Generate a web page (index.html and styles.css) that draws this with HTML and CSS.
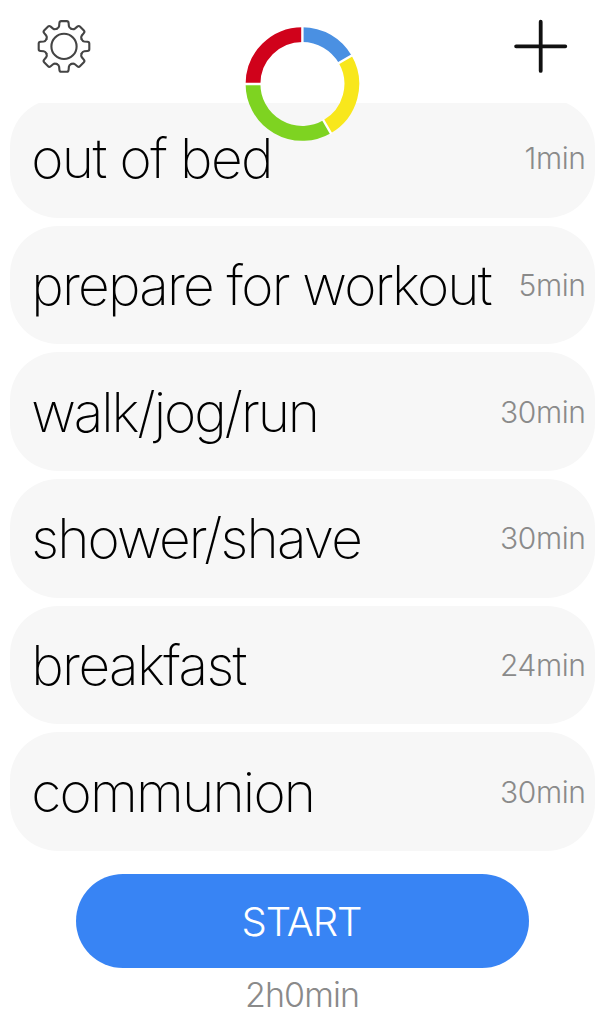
FILE: index.html
```html
<!DOCTYPE html>
<html lang="en">
<head>
<meta charset="utf-8">
<title>Routine</title>
<link rel="stylesheet" href="styles.css">
</head>
<body>
<div class="screen">
  <header class="topbar">
    <svg class="icon gear" viewBox="-28 -28.4 56 56" aria-label="Settings">
      <defs><path id="tooth" d="M-7.27-17.55C-5.6-18.3-5.1-18.8-4.9-20.3L-4.6-23.4Q-4.4-25.3-2.8-25.3H2.8Q4.4-25.3 4.6-23.4L4.9-20.3C5.1-18.8 5.6-18.3 7.27-17.55"/></defs>
      <circle r="12.6"/>
      <use href="#tooth"/><use href="#tooth" transform="rotate(45)"/><use href="#tooth" transform="rotate(90)"/><use href="#tooth" transform="rotate(135)"/><use href="#tooth" transform="rotate(180)"/><use href="#tooth" transform="rotate(225)"/><use href="#tooth" transform="rotate(270)"/><use href="#tooth" transform="rotate(315)"/>
    </svg>
    <svg class="ring" viewBox="-58.4 -58 117 116" aria-hidden="true">
      <g class="arcs">
        <path class="blue" d="M0-49.4A49.4 49.4 0 0 1 42.78-24.7"/>
        <path class="yellow" d="M42.78-24.7A49.4 49.4 0 0 1 24.7 42.78"/>
        <path class="green" d="M24.7 42.78A49.4 49.4 0 0 1-49.4 0"/>
        <path class="red" d="M-49.4 0A49.4 49.4 0 0 1 0-49.4"/>
      </g>
      <path class="gaps" d="M0-41V-58M35.5-20.5L50.2-29M20.5 35.5L29 50.2M-41 0H-58"/>
    </svg>
    <svg class="icon plus" viewBox="-28.7 -28.3 56 56" aria-label="Add"><path d="M-24.6 0H24.6M0-24.6V24.6"/></svg>
  </header>
  <main class="list">
    <div class="card"><span class="name">out of bed</span><span class="time">1min</span></div>
    <div class="card"><span class="name phrase">prepare for workout</span><span class="time">5min</span></div>
    <div class="card"><span class="name tight">walk/jog/run</span><span class="time">30min</span></div>
    <div class="card"><span class="name phrase">shower/shave</span><span class="time">30min</span></div>
    <div class="card"><span class="name">breakfast</span><span class="time">24min</span></div>
    <div class="card"><span class="name phrase">communion</span><span class="time">30min</span></div>
  </main>
  <footer class="footer">
    <button class="start">START</button>
    <div class="total">2h0min</div>
  </footer>
</div>
</body>
</html>
```
FILE: styles.css
```css
* { box-sizing: border-box; }
body { margin: 0; background: #fff; font-family: Inter, "Open Sans", sans-serif; }
.screen { width: 604px; height: 1024px; display: flex; flex-direction: column; overflow: hidden; }
.topbar { position: relative; height: 103px; flex: none; display: flex; justify-content: space-between; align-items: flex-start; padding: 18px 36px 0 36px; }
.icon { width: 56px; height: 56px; fill: none; stroke-linecap: round; stroke-linejoin: round; }
.gear { stroke: #444; stroke-width: 2.1; }
.plus { stroke: #111; stroke-width: 3.8; }
/* The progress ring overlaps the first card. */
.ring { position: absolute; z-index: 1; left: 244px; top: 26px; width: 117px; height: 116px; fill: none; }
.arcs { stroke-width: 14.8; }
.blue { stroke: #4a90e2; }
.yellow { stroke: #f8e71c; }
.green { stroke: #7ed321; }
.red { stroke: #d0021b; }
.gaps { stroke: #fff; stroke-width: 2.4; }
.list { flex: none; height: 748px; overflow: hidden; display: flex; flex-direction: column; justify-content: flex-end; gap: 8px; padding: 0 9px 0 9.7px; }
.card { flex: none; height: 118.67px; border-radius: 48px; background: #f7f7f7; display: flex; align-items: center; justify-content: space-between; padding: 0 9.4px 0 21.5px; white-space: nowrap; }
.name { font-size: 55px; font-weight: 180; line-height: 66px; letter-spacing: -1.6px; color: #000; }
.phrase { letter-spacing: -1.8px; }
.tight { letter-spacing: -2.1px; }
.time { font-size: 30px; font-weight: 300; line-height: 36px; letter-spacing: -.4px; color: #8a8a8a; }
.footer { display: flex; flex-direction: column; align-items: center; padding-top: 23px; }
.start { width: 453px; height: 94px; border: 0; border-radius: 47px; background: #3884f4; color: #fff; font: 300 40px/48px Inter, sans-serif; letter-spacing: -1px; padding: 2px 2px 0 0; margin-left: 1px; }
.total { margin-top: 6px; font-size: 34px; font-weight: 300; line-height: 41px; letter-spacing: -.9px; color: #8a8a8a; }
```
